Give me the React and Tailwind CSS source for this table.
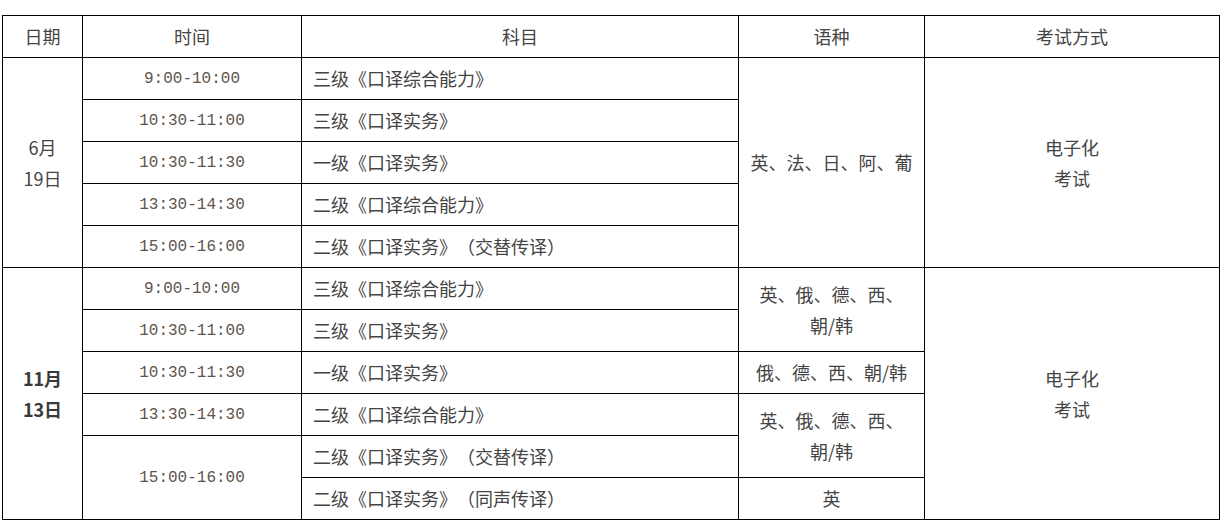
const cjk = "font-['Microsoft_YaHei','Noto_Sans_CJK_SC',sans-serif]";
const mono = "font-['Liberation_Mono','Noto_Sans_CJK_SC',monospace]";

const td = "border border-black h-[42px] p-0 align-middle";

function Time({ children, rows = 1 }) {
  return (
    <td rowSpan={rows} className={`${td} text-center text-[16px] text-[#5e544c] ${mono}`}>
      {children}
    </td>
  );
}

function Subject({ children }) {
  return <td className={`${td} pl-[11px] text-left`}>{children}</td>;
}

export default function App() {
  return (
    <div className={`bg-white w-[1223px] h-[522px] pt-[15px] pl-[2px] text-[18px] text-[#444] [text-spacing-trim:space-all] ${cjk}`}>
      <table className="table-fixed border-collapse w-[1217px]">
        <colgroup>
          <col className="w-[80px]" />
          <col className="w-[219px]" />
          <col className="w-[437px]" />
          <col className="w-[186px]" />
          <col className="w-[295px]" />
        </colgroup>
        <thead>
          <tr>
            <th className={`${td} font-normal`}>日期</th>
            <th className={`${td} font-normal`}>时间</th>
            <th className={`${td} font-normal`}>科目</th>
            <th className={`${td} font-normal`}>语种</th>
            <th className={`${td} font-normal`}>考试方式</th>
          </tr>
        </thead>
        <tbody>
          {/* 6月19日 */}
          <tr>
            <td rowSpan={5} className={`${td} text-center leading-[31px]`}>
              6月<br />19日
            </td>
            <Time>9:00-10:00</Time>
            <Subject>三级《口译综合能力》</Subject>
            <td rowSpan={5} className={`${td} text-center`}>英、法、日、阿、葡</td>
            <td rowSpan={5} className={`${td} text-center leading-[31px]`}>
              电子化<br />考试
            </td>
          </tr>
          <tr>
            <Time>10:30-11:00</Time>
            <Subject>三级《口译实务》</Subject>
          </tr>
          <tr>
            <Time>10:30-11:30</Time>
            <Subject>一级《口译实务》</Subject>
          </tr>
          <tr>
            <Time>13:30-14:30</Time>
            <Subject>二级《口译综合能力》</Subject>
          </tr>
          <tr>
            <Time>15:00-16:00</Time>
            <Subject>二级《口译实务》（交替传译）</Subject>
          </tr>

          {/* 11月13日 */}
          <tr>
            <td rowSpan={6} className={`${td} text-center leading-[31px] font-semibold text-[#3a3a3a]`}>
              11月<br />13日
            </td>
            <Time>9:00-10:00</Time>
            <Subject>三级《口译综合能力》</Subject>
            <td rowSpan={2} className={`${td} text-center leading-[31px]`}>
              英、俄、德、西、<br />朝/韩
            </td>
            <td rowSpan={6} className={`${td} text-center leading-[31px]`}>
              电子化<br />考试
            </td>
          </tr>
          <tr>
            <Time>10:30-11:00</Time>
            <Subject>三级《口译实务》</Subject>
          </tr>
          <tr>
            <Time>10:30-11:30</Time>
            <Subject>一级《口译实务》</Subject>
            <td className={`${td} text-center whitespace-nowrap`}>俄、德、西、朝/韩</td>
          </tr>
          <tr>
            <Time>13:30-14:30</Time>
            <Subject>二级《口译综合能力》</Subject>
            <td rowSpan={2} className={`${td} text-center leading-[31px]`}>
              英、俄、德、西、<br />朝/韩
            </td>
          </tr>
          <tr>
            <Time rows={2}>15:00-16:00</Time>
            <Subject>二级《口译实务》（交替传译）</Subject>
          </tr>
          <tr>
            <Subject>二级《口译实务》（同声传译）</Subject>
            <td className={`${td} text-center`}>英</td>
          </tr>
        </tbody>
      </table>
    </div>
  );
}
